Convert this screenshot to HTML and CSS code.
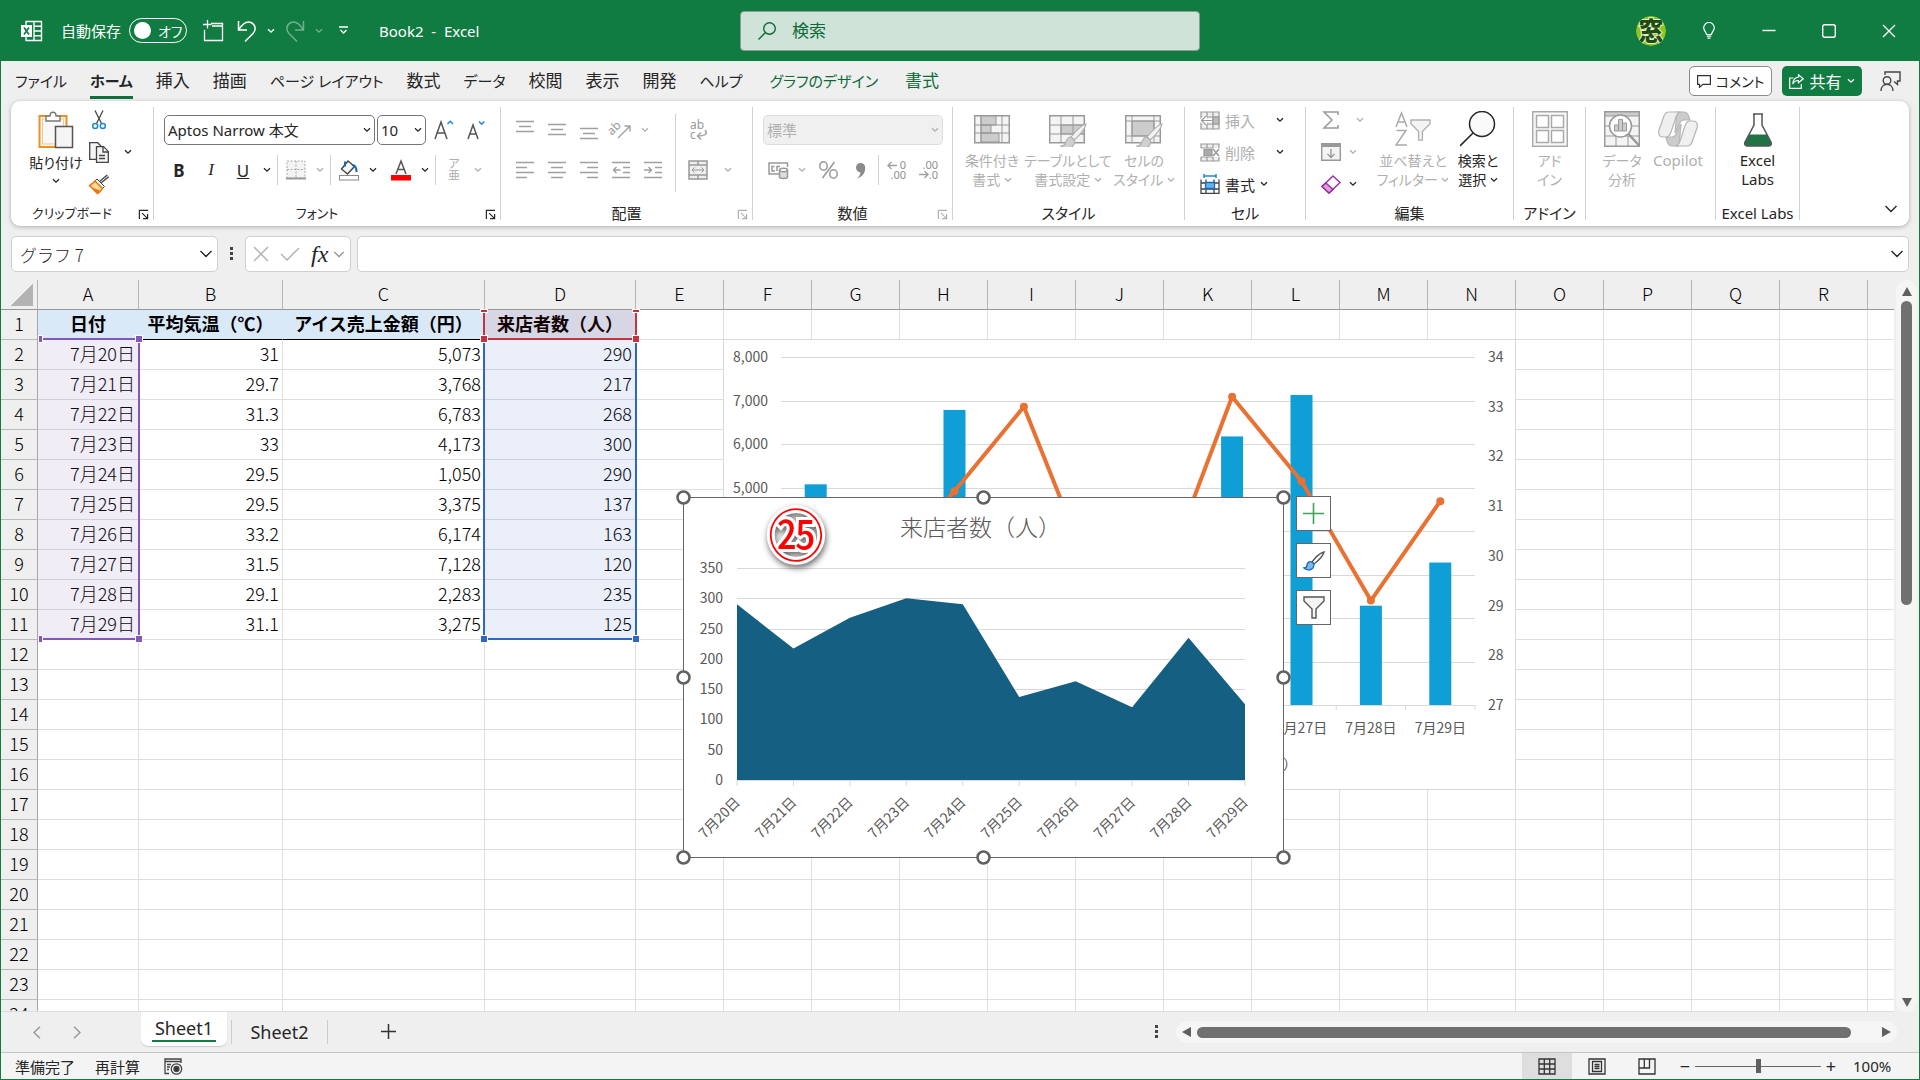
FILE: index.html
```html
<!DOCTYPE html>
<html lang="ja">
<head>
	<meta charset="UTF-8">
	<title>Book2 - Excel</title>
	<link rel="stylesheet" href="styles.css">
</head>
<body>

<!-- アイコン定義 -->
<svg class="defs" width="0" height="0">
	<symbol id="chev" viewBox="0 0 8 6"><path d="M1 1.2l3 3 3-3" fill="none" stroke="currentColor" stroke-width="1.3"/></symbol>
	<symbol id="chev-l" viewBox="0 0 14 10"><path d="M1.5 2l5.5 5.5L12.500 2" fill="none" stroke="currentColor" stroke-width="1.4"/></symbol>
	<symbol id="launch" viewBox="0 0 12 12"><path d="M1.500 11V1.500H11M4.500 4.500l5.500 5.500M10.500 5.500v5h-5" fill="none" stroke="currentColor" stroke-width="1.3"/></symbol>
	<symbol id="lens" viewBox="0 0 36 36"><circle cx="22" cy="13" r="12.500" fill="#fafafa" stroke="currentColor" stroke-width="1.5"/><path d="M13 22L0 35" stroke="currentColor" stroke-width="1.6"/></symbol>
	<symbol id="brush" viewBox="0 0 36 34">
		<path d="M35 9c-4 1-11 8-15 13l3 3c5-4 11-11 12-16z" fill="#f2f2f2" stroke="currentColor" stroke-width="1.200"/>
		<path d="M20 22c-3 0-4 2-5 5-1 3-3 4-5 4 3 3 11 4 13-2 1-2 1-3 0-4z" fill="#d0d0d0" stroke="currentColor" stroke-width="1.200"/>
	</symbol>
	<symbol id="funnel" viewBox="0 0 22 24"><path d="M1 1h20v4l-8 8v9H9v-9L1 5z" fill="#f4f4f4" stroke="currentColor" stroke-width="1.400"/></symbol>
</svg>

<header class="titlebar">
	<svg class="logo" width="22" height="22" viewBox="0 0 22 22" fill="none" stroke="#fff" stroke-width="1.400">
		<path d="M5 5V1.500h15.500v19H5V17M13 1.500v19M13 6.200h7.500M13 11h7.500M13 15.700h7.500"/>
		<rect x="0" y="5" width="11" height="12" fill="#fff" stroke="none"/>
		<path d="M3 7.500l5 7M8 7.500l-5 7" stroke="#107c41" stroke-width="1.700"/>
	</svg>
	<span class="autosave" id="autosave">自動保存</span>
	<button class="toggle" role="switch" aria-checked="false" aria-labelledby="autosave"><i></i>オフ</button>
	<button class="tb save" aria-label="新規"><svg width="22" height="22" viewBox="0 0 22 22" fill="none" stroke="#fff" stroke-width="1.300"><path d="M9 3.500h11.500v17h-18V10M5.500 0v8.500M1 4.500h8.500M10 6h10"/></svg></button>
	<button class="tb" aria-label="元に戻す"><svg width="20" height="22" viewBox="0 0 20 22" fill="none" stroke="#fff" stroke-width="1.500"><path d="M1.500 1v9H10M2 9.500C6 3 10 1 14 2.500c4.500 2 5.500 7 2 11L8 21.500"/></svg></button>
	<button class="tb narrow" aria-label="元に戻す一覧"><svg width="8" height="6"><use href="#chev"/></svg></button>
	<button class="tb dim" aria-label="やり直し"><svg width="20" height="22" viewBox="0 0 20 22" fill="none" stroke="#fff" stroke-width="1.500"><path d="M18.500 1v9H10M18 9.500C14 3 10 1 6 2.500c-4.500 2-5.500 7-2 11l8 8"/></svg></button>
	<button class="tb narrow dim" aria-label="やり直し一覧"><svg width="8" height="6"><use href="#chev"/></svg></button>
	<button class="tb" aria-label="ツールバーのカスタマイズ"><svg width="9" height="9" viewBox="0 0 9 9" fill="none" stroke="#fff" stroke-width="1.300"><path d="M0 1h9M1.500 4l3 3 3-3"/></svg></button>
	<span class="doc">Book2&nbsp; -&nbsp; Excel</span>
	<label class="search">
		<svg width="18" height="18" viewBox="0 0 18 18" fill="none" stroke="#0e6b38" stroke-width="1.400"><circle cx="11.500" cy="6.500" r="5.800"/><path d="M7.500 10.500L.5 17.500"/></svg>
		<input type="text" placeholder="検索" aria-label="検索">
	</label>
	<div class="winbtns">
		<svg class="avatar" width="30" height="30" viewBox="0 0 30 30"><circle cx="15" cy="15" r="15" fill="#8fc31f"/><text x="15" y="24" text-anchor="middle">窓</text></svg>
		<button aria-label="ヒント"><svg width="12" height="17" viewBox="0 0 12 17" fill="none" stroke="#fff" stroke-width="1.200"><path d="M3.500 12.500C3.500 10 .7 9 .7 5.800a5.300 5.300 0 0 1 10.600 0C11.300 9 8.500 10 8.500 12.500zM3.800 14.200h4.500M4.500 16.200h3"/></svg></button>
		<button aria-label="最小化"><svg width="14" height="14" viewBox="0 0 14 14"><path d="M.5 6.500h13" stroke="#fff" stroke-width="1.400"/></svg></button>
		<button aria-label="最大化"><svg width="14" height="14" viewBox="0 0 14 14"><rect x=".7" y=".7" width="12.600" height="12.600" rx="2" fill="none" stroke="#fff" stroke-width="1.400"/></svg></button>
		<button aria-label="閉じる"><svg width="14" height="14" viewBox="0 0 14 14"><path d="M1 1l12 12M13 1L1 13" stroke="#fff" stroke-width="1.300"/></svg></button>
	</div>
</header>

<nav class="tabs">
	<a href="#" class="kana">ファイル</a>
	<a href="#" class="kana on">ホーム</a>
	<a href="#">挿入</a>
	<a href="#">描画</a>
	<a href="#" class="kana">ページ レイアウト</a>
	<a href="#">数式</a>
	<a href="#" class="kana">データ</a>
	<a href="#">校閲</a>
	<a href="#">表示</a>
	<a href="#">開発</a>
	<a href="#" class="kana">ヘルプ</a>
	<a href="#" class="kana ctx">グラフのデザイン</a>
	<a href="#" class="ctx">書式</a>
	<div class="tabs-right">
		<button class="comment"><svg width="14" height="14" viewBox="0 0 14 14" fill="none" stroke="#333" stroke-width="1.200"><path d="M.6 1.600h12.800v8.800H6L2.500 13.300v-2.900H.6z"/></svg>コメント</button>
		<button class="share"><svg width="15" height="15" viewBox="0 0 15 15" fill="none" stroke="#fff" stroke-width="1.200"><path d="M4.500 4H.7v10.300h11.600V10M9.500.8l4.700 4-4.700 4V6.500C6.500 6.400 5 7.500 3.800 10c.2-4 2-6.500 5.700-7z"/></svg>共有<svg width="8" height="6"><use href="#chev"/></svg></button>
		<button class="person" aria-label="フィードバック"><svg width="21" height="21" viewBox="0 0 21 21" fill="none" stroke="#444" stroke-width="1.400"><path d="M5 4V1h15v9h-2.500v3.500L14 10.500M1 20c0-9 12-9 12 0"/><circle cx="7" cy="9.500" r="3.800"/></svg></button>
	</div>
</nav>

<section class="ribbon">
	<div class="group g-clip">
		<div class="body">
			<button class="big">
				<svg width="36" height="38" viewBox="0 0 36 38"><rect x="1.500" y="5" width="27" height="31" fill="#fff8ec" stroke="#e8912d" stroke-width="2"/><rect x="4.500" y="8" width="21" height="25" fill="#f8f8f8" stroke="#f5c98a"/><path d="M8 10V5h4c0-5 6-5 6 0h4v5z" fill="#fff" stroke="#777" stroke-width="1.400"/><rect x="17.500" y="15.500" width="17" height="21" fill="#f5f5f5" stroke="#555" stroke-width="1.500"/></svg>
				<span>貼り付け</span><svg class="under" width="8" height="6"><use href="#chev"/></svg>
			</button>
			<div class="stack">
				<button class="ib" aria-label="切り取り"><svg width="14" height="20" viewBox="0 0 14 20" fill="none" stroke="#444" stroke-width="1.300"><path d="M3 .5l6.500 13M11 .5L4.500 13.500"/><g stroke="#1e8bd0" stroke-width="1.500"><circle cx="3.200" cy="16" r="2.500"/><circle cx="10.800" cy="16" r="2.500"/></g></svg></button>
				<button class="ib" aria-label="コピー"><svg width="20" height="21" viewBox="0 0 20 21" fill="#f4f4f4" stroke="#444" stroke-width="1.300"><path d="M.7.7h8l3 3v13.600H.7z"/><path d="M7.500 4.700h7l4.800 4.800v10.800H7.500z"/><path d="M14 5v5h5M10 13.500h6M10 16.500h6"/></svg></button>
				<button class="ib" aria-label="書式のコピー"><svg width="20" height="19" viewBox="0 0 20 19"><path d="M19 .8L11.500 7" stroke="#444" stroke-width="3.500"/><path d="M19 .8L11.500 7" stroke="#fff" stroke-width="1"/><path d="M8 4l7.500 7.500-2 2L6 6z" fill="#fff" stroke="#444"/><path d="M6 6l7.500 7.500c-1 2-3 4-5 5L.5 10.500C2.500 9 4.500 8 6 6z" fill="#fbd9a0" stroke="#e8790c" stroke-width="1.500"/><path d="M8.500 18.500L3 12.500l8 3z" fill="#e8790c"/></svg></button>
			</div>
			<button class="cb" aria-label="コピー一覧"><svg width="8" height="6"><use href="#chev"/></svg></button>
		</div>
		<div class="name">クリップボード</div><svg class="la" width="11" height="11"><use href="#launch"/></svg>
	</div>

	<div class="group g-font">
		<div class="body rows">
			<div class="row">
				<span class="combo fname"><select aria-label="フォント"><option>Aptos Narrow 本文</option></select><svg width="8" height="6"><use href="#chev"/></svg></span>
				<span class="combo fsize"><select aria-label="サイズ"><option>10</option></select><svg width="8" height="6"><use href="#chev"/></svg></span>
				<button class="ib" aria-label="拡大"><svg width="20" height="20" viewBox="0 0 20 20" fill="none" stroke="#555" stroke-width="1.500"><path d="M1 19L7 2l6 17M3.200 13h7.700"/><path d="M13.500 4l2.700-2.700L19 4" stroke="#1e8bd0"/></svg></button>
				<button class="ib" aria-label="縮小"><svg width="20" height="20" viewBox="0 0 20 20" fill="none" stroke="#555" stroke-width="1.500"><path d="M2 19L7 5l5 14M3.800 14h6.500"/><path d="M13 1.500l2.700 2.700 2.700-2.700" stroke="#1e8bd0"/></svg></button>
			</div>
			<div class="row">
				<button class="ib t b">B</button><button class="ib t i">I</button><button class="ib t u">U</button><button class="cb" aria-label="下線"><svg width="8" height="6"><use href="#chev"/></svg></button>
				<i class="sep"></i>
				<button class="ib off" aria-label="罫線"><svg width="20" height="20" viewBox="0 0 20 20" stroke="#aaa" fill="#f4f4f4"><rect x="1" y="1" width="18" height="17" stroke-dasharray="2 1.500"/><path d="M10 1v17M1 9.500h18" stroke-dasharray="2 1.500"/><path d="M0 18.500h20" stroke="#999" stroke-width="2"/></svg></button><button class="cb off" aria-label="罫線一覧"><svg width="8" height="6"><use href="#chev"/></svg></button>
				<i class="sep"></i>
				<button class="ib" aria-label="塗りつぶし"><svg width="20" height="21" viewBox="0 0 20 21"><path d="M9 1L2.500 9l6 5 7-7.500z" fill="#f6f6f6" stroke="#444" stroke-width="1.400"/><path d="M6 1.500v5M13 5c3 0 4.500 3 4.500 7" stroke="#1769b5" stroke-width="2" fill="none"/><rect x=".5" y="15.500" width="19" height="4.500" fill="#fff" stroke="#888"/></svg></button><button class="cb" aria-label="塗りつぶし一覧"><svg width="8" height="6"><use href="#chev"/></svg></button>
				<button class="ib fc" aria-label="文字色"><svg width="20" height="21" viewBox="0 0 20 21"><path d="M5 14L10 1l5 13M6.800 9.500h6.500" fill="none" stroke="#555" stroke-width="1.500"/><rect y="15" width="20" height="5.500" fill="#f00"/></svg></button><button class="cb" aria-label="文字色一覧"><svg width="8" height="6"><use href="#chev"/></svg></button>
				<i class="sep"></i>
				<button class="ib off ruby">ア<br>亜</button><button class="cb off" aria-label="ふりがな一覧"><svg width="8" height="6"><use href="#chev"/></svg></button>
			</div>
		</div>
		<div class="name">フォント</div><svg class="la" width="11" height="11"><use href="#launch"/></svg>
	</div>

	<div class="group g-align">
		<div class="body">
			<div class="rows off">
				<div class="row">
					<button class="ib" aria-label="上揃え"><svg width="18" height="20" viewBox="0 0 18 20"><path d="M0 1.500h18M3 6.500h12M0 11.500h18" class="ln"/></svg></button>
					<button class="ib" aria-label="上下中央"><svg width="18" height="20" viewBox="0 0 18 20"><path d="M0 4.500h18M3 9.500h12M0 14.500h18" class="ln"/></svg></button>
					<button class="ib" aria-label="下揃え"><svg width="18" height="20" viewBox="0 0 18 20"><path d="M0 8.500h18M3 13.500h12M0 18.500h18" class="ln"/></svg></button>
					<button class="ib" aria-label="方向"><svg width="20" height="20" viewBox="0 0 20 20"><text x="-3" y="11" transform="rotate(-45 5 9)" class="ab">ab</text><path d="M7 18L18.500 6.500M13.500 6h5.500v5.500" class="ln"/></svg></button>
					<button class="cb" aria-label="方向一覧"><svg width="8" height="6"><use href="#chev"/></svg></button>
				</div>
				<div class="row">
					<button class="ib" aria-label="左揃え"><svg width="18" height="18" viewBox="0 0 18 18"><path d="M0 1.500h18M0 6.500h11M0 11.500h18M0 16.500h11" class="ln"/></svg></button>
					<button class="ib" aria-label="中央揃え"><svg width="18" height="18" viewBox="0 0 18 18"><path d="M0 1.500h18M3 6.500h12M0 11.500h18M3 16.500h12" class="ln"/></svg></button>
					<button class="ib" aria-label="右揃え"><svg width="18" height="18" viewBox="0 0 18 18"><path d="M0 1.500h18M7 6.500h11M0 11.500h18M7 16.500h11" class="ln"/></svg></button>
					<button class="ib" aria-label="インデント解除"><svg width="18" height="18" viewBox="0 0 18 18"><path d="M0 1.500h18M11 6.500h7M11 11.500h7M0 16.500h18M1.500 9h7M4.500 6l-3 3 3 3" class="ln"/></svg></button>
					<button class="ib" aria-label="インデント"><svg width="18" height="18" viewBox="0 0 18 18"><path d="M0 1.500h18M11 6.500h7M11 11.500h7M0 16.500h18M0 9h7M4.500 6l3 3-3 3" class="ln"/></svg></button>
				</div>
			</div>
			<i class="sep tall"></i>
			<div class="rows off">
				<div class="row"><button class="ib" aria-label="折り返し"><svg width="19" height="20" viewBox="0 0 19 20"><text x="1" y="9" class="ab">ab</text><text x="1" y="19" class="ab">c</text><path d="M16 10c3 3 1 6-7 6M12 12.500L8.500 16l3.500 3.500" class="ln"/></svg></button></div>
				<div class="row"><button class="ib" aria-label="セルを結合"><svg width="20" height="20" viewBox="0 0 20 20" fill="#eee" stroke="#999"><path d="M1 1h18v18H1zM1 5h18M1 15h18M10 1v4M10 15v4" stroke-width="1.500"/><path d="M4 10h12M6.500 7.500L4 10l2.500 2.500M13.500 7.500L16 10l-2.500 2.500" fill="none"/></svg></button><button class="cb merge" aria-label="結合一覧"><svg width="8" height="6"><use href="#chev"/></svg></button></div>
			</div>
		</div>
		<div class="name">配置</div><svg class="la off" width="11" height="11"><use href="#launch"/></svg>
	</div>

	<div class="group g-num">
		<div class="body rows off">
			<div class="row"><span class="combo fmt"><select aria-label="表示形式" disabled><option>標準</option></select><svg width="8" height="6"><use href="#chev"/></svg></span></div>
			<div class="row">
				<button class="ib" aria-label="通貨"><svg width="21" height="18" viewBox="0 0 21 18" fill="none" stroke="#999" stroke-width="1.500"><path d="M11 13H1V2h18.500v4M6.500 5.500H4v4.500h3M9 10V5.500h3"/><path d="M11.500 9v7c0 2 8 2 8 0V9" fill="#ddd"/><ellipse cx="15.500" cy="9" rx="4" ry="1.700" fill="#fff"/></svg></button><button class="cb" aria-label="通貨一覧"><svg width="8" height="6"><use href="#chev"/></svg></button>
				<button class="ib pc" aria-label="パーセント"><svg width="19" height="18" viewBox="0 0 19 18" fill="none" stroke="#999" stroke-width="1.500"><ellipse cx="4.500" cy="5" rx="3.700" ry="4.200"/><ellipse cx="14.500" cy="13" rx="3.700" ry="4.200"/><path d="M15.500 1L3.500 17"/></svg></button>
				<button class="ib" aria-label="桁区切り"><svg width="11" height="17" viewBox="0 0 11 17"><path d="M1 5.500a4.600 4.600 0 0 1 9.200 0C10.500 11 7 15 2 16.500c2-2 3.500-4 3.500-6.300C3 10.500 1 8 1 5.500z" fill="#8a8a8a"/></svg></button>
				<i class="sep"></i>
				<button class="ib" aria-label="小数点以下を増やす"><svg width="20" height="20" viewBox="0 0 20 20"><text x="19" y="9" class="dec">0</text><text x="19" y="19" class="dec">.00</text><path d="M1 5.500h9M4.500 2L1 5.500 4.500 9" class="ln"/></svg></button>
				<button class="ib" aria-label="小数点以下を減らす"><svg width="20" height="20" viewBox="0 0 20 20"><text x="19" y="9" class="dec">.00</text><text x="19" y="19" class="dec">.0</text><path d="M0 14.500h9M5.500 11L9 14.500 5.500 18" class="ln"/></svg></button>
			</div>
		</div>
		<div class="name">数値</div><svg class="la off" width="11" height="11"><use href="#launch"/></svg>
	</div>

	<div class="group g-style">
		<div class="body off">
			<button class="big"><svg width="36" height="36" viewBox="0 0 36 36" stroke="#999"><path d="M.7 4.700h34.600v27H.7z" fill="#f4f4f4" stroke-width="1.500"/><path d="M7 5h15v9H7zM7 14h10v8H7zM7 22h18v9H7z" fill="#ccc"/><path d="M7 5v26M1 14h34M1 22h34M28 5v26" fill="none"/></svg><span>条件付き<br>書式 <svg width="8" height="6"><use href="#chev"/></svg></span></button>
			<button class="big"><svg width="38" height="36" viewBox="0 0 38 36" stroke="#999"><path d="M.7 4.700h34.600v27H.7z" fill="#f4f4f4" stroke-width="1.500"/><path d="M12 14h23v9H12z" fill="#ccc"/><path d="M12 5v26M24 5v26M1 14h34M1 23h34" fill="none"/><use href="#brush" x="2" y="4" width="36" height="34"/></svg><span>テーブルとして<br>書式設定 <svg width="8" height="6"><use href="#chev"/></svg></span></button>
			<button class="big"><svg width="38" height="36" viewBox="0 0 38 36" stroke="#999"><path d="M.7 4.700h34.600v27H.7z" fill="#f4f4f4" stroke-width="1.500"/><path d="M7 10h22v15H7z" fill="#ccc"/><path d="M7 5v26M29 5v26M1 10h34M1 25h34" fill="none"/><use href="#brush" x="2" y="4" width="36" height="34"/></svg><span>セルの<br>スタイル <svg width="8" height="6"><use href="#chev"/></svg></span></button>
		</div>
		<div class="name">スタイル</div>
	</div>

	<div class="group g-cell">
		<div class="body stack">
			<div class="line"><button class="tx off"><svg width="20" height="19" viewBox="0 0 20 19" stroke="#999" fill="#eee" stroke-width="1.200"><path d="M1 1h18v17H1zM1 6h18M1 13h18M7 1v17M13 1v17"/><path d="M13 6h6v7h-6z" fill="#bbb"/><path d="M12 9.500H2M6 5L1.500 9.500 6 14" stroke="#fff" stroke-width="4"/><path d="M12 9.500H2M6 5L1.500 9.500 6 14" fill="none"/></svg>挿入</button><button class="cb" aria-label="挿入一覧"><svg width="8" height="6"><use href="#chev"/></svg></button></div>
			<div class="line"><button class="tx off"><svg width="20" height="19" viewBox="0 0 20 19" stroke="#999" fill="#eee" stroke-width="1.200"><path d="M1 5V1h18v4M1 14v4h18v-4M7 1v4M13 1v4M7 14v4M13 14v4M1 5h12M1 14h12"/><path d="M4 6.500h8v6H4z" fill="#aaa"/><path d="M13 6l6 7M19 6l-6 7" stroke-width="1.500"/></svg>削除</button><button class="cb" aria-label="削除一覧"><svg width="8" height="6"><use href="#chev"/></svg></button></div>
			<div class="line near"><button class="tx"><svg width="20" height="20" viewBox="0 0 20 20" stroke="#444" fill="#fff" stroke-width="1.300"><path d="M1 5.500v13.800h18V5.500M1 9h18M1 15h18M6 5.500v13.800M14 5.500v13.800"/><path d="M5.500 8.500h9v6h-9z" fill="#6bb0ec" stroke="#1769b5"/><path d="M4 2h12M4 0v4M16 0v4" stroke="#1e8bd0" stroke-width="1.500"/></svg>書式</button><button class="cb" aria-label="書式一覧"><svg width="8" height="6"><use href="#chev"/></svg></button></div>
		</div>
		<div class="name">セル</div>
	</div>

	<div class="group g-edit">
		<div class="body">
			<div class="stack">
				<div class="line off sum"><button class="ib" aria-label="合計"><svg width="16" height="18" viewBox="0 0 16 18"><path d="M15 4V1H1l8 8-8 8h14v-3" fill="none" stroke="#999" stroke-width="1.500"/></svg></button><button class="cb" aria-label="合計一覧"><svg width="8" height="6"><use href="#chev"/></svg></button></div>
				<div class="line off"><button class="ib" aria-label="フィル"><svg width="20" height="18" viewBox="0 0 20 18" fill="#f4f4f4" stroke="#999" stroke-width="1.400"><path d="M.7.7h18.600v16.600H.7z"/><path d="M1 2.500h18" stroke-width="3"/><path d="M10 6v8M6.500 11l3.500 3.500 3.500-3.500" fill="none"/></svg></button><button class="cb" aria-label="フィル一覧"><svg width="8" height="6"><use href="#chev"/></svg></button></div>
				<div class="line"><button class="ib" aria-label="クリア"><svg width="20" height="19" viewBox="0 0 20 19" stroke="#9a2ca0" stroke-width="1.400"><path d="M12 1l7 6.500L8 18l-7-6.500z" fill="#fff"/><path d="M5 8l7 6.500L8 18l-7-6.500z" fill="#d9a0dc"/></svg></button><button class="cb" aria-label="クリア一覧"><svg width="8" height="6"><use href="#chev"/></svg></button></div>
			</div>
			<button class="big off"><svg width="36" height="36" viewBox="0 0 36 36" fill="none" stroke="#aaa" stroke-width="1.500"><path d="M1 16L6.500 2 12 16M3 11h7M1.500 19.500H11L1 34h11"/><use href="#funnel" x="15" y="8" width="21" height="23"/></svg><span>並べ替えと<br>フィルター <svg width="8" height="6"><use href="#chev"/></svg></span></button>
			<button class="big find"><svg width="36" height="36"><use href="#lens"/></svg><span>検索と<br>選択 <svg width="8" height="6"><use href="#chev"/></svg></span></button>
		</div>
		<div class="name">編集</div>
	</div>

	<div class="group g-add">
		<div class="body off"><button class="big"><svg width="36" height="36" viewBox="0 0 36 36" fill="#f8f8f8" stroke="#aaa" stroke-width="1.500"><path d="M.7.7h34.600v34.600H.7z"/><path d="M4.500 4.500h12v12h-12zM19.500 4.500h12v12h-12zM4.500 19.500h12v12h-12zM19.500 19.500h12v12h-12z" fill="#fff"/></svg><span>アド<br>イン</span></button></div>
		<div class="name">アドイン</div>
	</div>

	<div class="group g-data">
		<div class="body off">
			<button class="big"><svg width="36" height="36" viewBox="0 0 36 36" fill="#f4f4f4" stroke="#999"><path d="M.7.7h34.600v34.600H.7z" stroke-width="1.500"/><path d="M1 1h34v4H1z" fill="#ccc"/><path d="M1 15h34M1 25h34M12 25v10M24 25v10"/><circle cx="16.500" cy="15" r="11" fill="#fff" stroke-width="1.500"/><path d="M24.500 23l11 12" stroke-width="2.500"/><path d="M10.500 14h4v6h-4zM14.500 8.500h4V20h-4zM18.500 12h4v8h-4z" fill="#ccc"/></svg><span>データ<br>分析</span></button>
			<button class="big latin copilot"><svg width="40" height="36" viewBox="0 0 40 36" stroke="#b5b5b5" stroke-width="1.200"><path d="M19 1h7c3 0 4 2 5 5l1 3h-6c-3 0-4 2-5 5l-4 8z" fill="#ccc"/><path d="M21 35h-7c-3 0-4-2-5-5l-1-4h6c3 0 4-2 5-5l4-8z" fill="#ccc"/><path d="M11 1h12c-3 0-4 2-5 5l-5 15c-1 3-2 5-5 5H5c-4 0-5-3-4-7L6 5c1-3 2-4 5-4z" fill="#f0f0f0"/><path d="M29 35H17c3 0 4-2 5-5l5-15c1-3 2-5 5-5h3c4 0 5 3 4 7l-5 14c-1 3-2 4-5 4z" fill="#f0f0f0"/></svg><span>Copilot</span></button>
		</div>
	</div>

	<div class="group g-labs">
		<div class="body"><button class="big latin"><svg width="28" height="34" viewBox="0 0 28 34"><path d="M10 1v11L1 29c-1 2 0 4 2 4h22c2 0 3-2 2-4l-9-17V1z" fill="#fff"/><path d="M5 21.500h18l4 8c.5 2-.5 3.500-2 3.500H3c-2 0-2.500-2-2-3.500z" fill="#217346"/><path d="M9 1h10M10 1v11L1 29c-1 2 0 4 2 4h22c2 0 3-2 2-4l-9-17V1" fill="none" stroke="#555" stroke-width="1.500"/></svg><span>Excel<br>Labs</span></button></div>
		<div class="name">Excel Labs</div>
	</div>
	<button class="collapse" aria-label="リボンを折りたたむ"><svg width="14" height="10"><use href="#chev-l"/></svg></button>
</section>

<div class="fbar">
	<div class="box namebox"><input type="text" value="グラフ 7" aria-label="名前ボックス"><svg width="14" height="10"><use href="#chev-l"/></svg></div>
	<svg class="dots" width="4" height="14" viewBox="0 0 4 14" fill="#444"><path d="M0 0h3v3H0zM0 5h3v3H0zM0 10h3v3H0z"/></svg>
	<div class="box fx">
		<button aria-label="キャンセル"><svg width="16" height="16" viewBox="0 0 16 16"><path d="M1 1l14 14M15 1L1 15" stroke="#b5b5b5" stroke-width="1.500"/></svg></button>
		<button aria-label="入力"><svg width="20" height="14" viewBox="0 0 20 14"><path d="M1 7l6 6L19 1" fill="none" stroke="#b5b5b5" stroke-width="1.500"/></svg></button>
		<button class="fn">fx</button>
		<button class="fnch" aria-label="関数一覧"><svg width="12" height="9"><use href="#chev-l"/></svg></button>
	</div>
	<div class="box formula"><input type="text" aria-label="数式バー"><svg width="14" height="10"><use href="#chev-l"/></svg></div>
</div>

<main class="work">
	<div class="sheet">
		<table id="grid"></table>
		<div class="range purple"><i></i><i></i><i></i><i></i></div>
		<div class="range blue"><i></i><i></i><i></i><i></i></div>
		<div class="range red"><i></i><i></i><i></i><i></i></div>
		<svg class="chart combo-chart" id="combo" width="793" height="451"></svg>
		<svg class="chart area-chart" id="area" width="616" height="376"></svg>
		<div class="chartbtns">
			<button aria-label="グラフ要素"><svg width="21" height="21" viewBox="0 0 21 21"><path d="M10.500 0v21M0 10.500h21" stroke="#3aa655" stroke-width="1.600"/></svg></button>
			<button aria-label="グラフスタイル"><svg width="22" height="20" viewBox="0 0 22 20"><path d="M21 1c-4 1-9 6-12 10l2 2c4-3 9-8 10-12z" fill="#fff" stroke="#555" stroke-width="1.300"/><path d="M9 11c-3-1-5 1-5 3s-1 3-3 3c3 3 10 3 10-4z" fill="#7ab8ef" stroke="#1769b5" stroke-width="1.300"/></svg></button>
			<button aria-label="グラフフィルター"><svg width="22" height="24"><use href="#funnel"/></svg></button>
		</div>
	</div>
	<div class="vscroll"><b class="up"></b><span></span><b class="down"></b></div>
</main>

<footer>
	<div class="sheettabs">
		<button class="nav" aria-label="前へ"><svg width="8" height="13" viewBox="0 0 8 13"><path d="M7 .7L1 6.500l6 5.800" fill="none" stroke="#999" stroke-width="1.500"/></svg></button>
		<button class="nav" aria-label="次へ"><svg width="8" height="13" viewBox="0 0 8 13"><path d="M1 .7l6 5.800-6 5.800" fill="none" stroke="#999" stroke-width="1.500"/></svg></button>
		<a href="#" class="st cur"><span>Sheet1</span></a>
		<a href="#" class="st">Sheet2</a>
		<button class="plus" aria-label="新しいシート"><svg width="15" height="15" viewBox="0 0 15 15"><path d="M7.500 0v15M0 7.500h15" stroke="#333" stroke-width="1.500"/></svg></button>
		<svg class="grip" width="4" height="14" viewBox="0 0 4 14" fill="#444"><path d="M0 0h3v3H0zM0 5h3v3H0zM0 10h3v3H0z"/></svg>
		<div class="hscroll"><b class="left"></b><span></span><b class="right"></b></div>
	</div>
	<div class="status">
		<span>準備完了</span><span>再計算</span>
		<svg class="rec" width="19" height="17" viewBox="0 0 19 17" fill="none" stroke="#444" stroke-width="1.300"><path d="M5 15.500H1V1h16v4M1 3.500h16M3 6.500h4M3 9h3M3 11.500h2" /><circle cx="12.500" cy="11" r="5.200"/><circle cx="12.500" cy="11" r="2.500" fill="#333"/></svg>
		<div class="views">
			<button class="cur" aria-label="標準"><svg width="18" height="17" viewBox="0 0 18 17" fill="none" stroke="#333" stroke-width="1.300"><path d="M1 1h16v15H1zM1 6h16M1 11h16M6.300 1v15M11.700 1v15"/></svg></button>
			<button aria-label="ページ レイアウト"><svg width="18" height="17" viewBox="0 0 18 17" fill="none" stroke="#333" stroke-width="1.300"><path d="M1 1h16v15H1zM4.500 3.500h9v10h-9zM6.500 6.500h5M6.500 8.500h5M6.500 10.500h5"/></svg></button>
			<button aria-label="改ページ"><svg width="18" height="17" viewBox="0 0 18 17" fill="none" stroke="#333" stroke-width="1.300"><path d="M1 1h16v15H1zM1 10h10.500V1M6.300 1v9"/></svg></button>
		</div>
		<button class="z">−</button>
		<input type="range" min="0" max="100" value="50" aria-label="ズーム">
		<button class="z">+</button>
		<span class="pct">100%</span>
	</div>
</footer>

<script type="text/javascript">
var days = ["7月20日","7月21日","7月22日","7月23日","7月24日","7月25日","7月26日","7月27日","7月28日","7月29日"];
var temp = [31,29.7,31.3,33,29.5,29.5,33.2,31.5,29.1,31.1];
var sales = [5073,3768,6783,4173,1050,3375,6174,7128,2283,3275];
var guests = [290,217,268,300,290,137,163,120,235,125];
var heads = ["日付","平均気温（℃）","アイス売上金額（円）","来店者数（人）"];

//シート本体
function makeGrid(){
	var letters = "ABCDEFGHIJKLMNOPQRS".split("");
	var html = '<colgroup><col class="col-h"><col class="col-a"><col class="col-b"><col class="col-c"><col class="col-d">';
	for(var i=4;i<letters.length;i++){
		html += '<col class="col-x">';
	}
	html += '</colgroup><thead><tr><th class="corner"></th>';
	for(var i=0;i<letters.length;i++){
		html += '<th scope="col">'+letters[i]+'</th>';
	}
	html += '</tr></thead><tbody>';
	for(var r=1;r<=24;r++){
		html += '<tr><th scope="row">'+r+'</th>';
		var cells = [];
		if(r==1){
			cells = heads;
		} else if(r<=11){
			cells = [days[r-2], temp[r-2], sales[r-2].toLocaleString("en-US"), guests[r-2]];
		}
		for(var c=0;c<letters.length;c++){
			var v = cells[c]===undefined ? "" : cells[c];
			html += (r==1 && c<4) ? '<td class="head">'+v+'</td>' : '<td>'+v+'</td>';
		}
		html += '</tr>';
	}
	document.getElementById("grid").innerHTML = html+'</tbody>';
}

function line(x1,y1,x2,y2){
	return '<path class="gl" d="M'+x1+' '+y1+'L'+x2+' '+y2+'"/>';
}

//棒と折れ線の複合グラフ
function makeCombo(){
	var left=58, right=752, top=18, bottom=366, step=(right-left)/10;
	var s = '<rect class="frame" x="0.5" y="0.5" width="792" height="450"/>';
	for(var i=0;i<=8;i++){
		var y = Math.round(bottom-(bottom-top)*i/8)+0.5;
		s += line(left,y,right,y);
		s += '<text class="ax end" x="45" y="'+(y+4)+'">'+(i*1000).toLocaleString("en-US")+'</text>';
	}
	for(var i=0;i<=7;i++){
		s += '<text class="ax" x="765" y="'+(bottom+5-(bottom-top)*i/7)+'">'+(27+i)+'</text>';
	}
	var pts = [], dots = "";
	for(var i=0;i<10;i++){
		var x = left+step*(i+0.5);
		var h = sales[i]/8000*(bottom-top);
		var ty = bottom-(temp[i]-27)/7*(bottom-top);
		s += '<rect class="bar" x="'+(x-11)+'" y="'+(bottom-h)+'" width="22" height="'+h+'"/>';
		s += line(left+step*(i+1),bottom,left+step*(i+1),bottom+5);
		s += '<text class="ax mid" x="'+x+'" y="394">'+days[i]+'</text>';
		pts.push(x+","+ty);
		dots += '<circle class="dot" cx="'+x+'" cy="'+ty+'" r="4"/>';
	}
	s += '<polyline class="tl" points="'+pts.join(" ")+'"/>'+dots;
	s += '<text class="ax end" x="574" y="430">アイス売上金額（円）　平均気温（℃）</text>';
	document.getElementById("combo").innerHTML = s;
}

//面グラフ（選択中）
function makeArea(){
	var left=62, right=570, top=79, bottom=291, step=(right-left)/9;
	var s = '<rect class="sel" x="8.5" y="8.5" width="600" height="360"/>';
	s += '<text class="ttl" x="225" y="47">来店者数（人）</text>';
	for(var i=0;i<=7;i++){
		var y = Math.round(bottom-(bottom-top)*i/7)+0.5;
		s += line(left,y,right,y);
		s += '<text class="ax end" x="48" y="'+(y+4)+'">'+i*50+'</text>';
	}
	var pts = left+","+bottom;
	for(var i=0;i<10;i++){
		var x = left+step*i;
		pts += " "+x+","+(bottom-guests[i]/350*(bottom-top));
		s += line(x,bottom,x,bottom+6);
		s += '<text class="ax end" x="'+(x+4)+'" y="314" transform="rotate(-45 '+(x+4)+' 314)">'+days[i]+'</text>';
	}
	s += '<polygon class="fill" points="'+pts+" "+right+","+bottom+'"/>';
	var hx=[8.5,308.5,608.5], hy=[8.5,188.5,368.5];
	for(var i=0;i<3;i++){
		for(var j=0;j<3;j++){
			if(i!=1 || j!=1){
				s += '<circle class="hd" cx="'+hx[i]+'" cy="'+hy[j]+'" r="6"/>';
			}
		}
	}
	s += '<text class="badge" x="121" y="67">㉕</text>';
	document.getElementById("area").innerHTML = s;
}

makeGrid();
makeCombo();
makeArea();
</script>
</body>
</html>
```

FILE: styles.css
```css
*{
	box-sizing: border-box;
	margin: 0;
	padding: 0;
}
body{
	display: flex;
	flex-direction: column;
	height: 100vh;
	overflow: hidden;
	border: 1px solid #107c41;
	border-top: 0;
	background: #efefef;
	color: #262626;
	font: 15px "Noto Sans", "Noto Sans CJK JP", sans-serif;
}
button, input, select{
	border: 0;
	background: none;
	color: inherit;
	font: inherit;
}
a{
	color: inherit;
	text-decoration: none;
}
svg{
	flex: none;
}
.defs{
	position: absolute;
}
.titlebar, .tabs, .ribbon, .status{
	font-feature-settings: "palt";
}

/* タイトルバー */
.titlebar{
	display: flex;
	align-items: center;
	height: 61px;
	padding-left: 20px;
	background: #107c41;
	color: #fff;
}
.autosave{
	margin-left: 18px;
	width: 60px;
	white-space: nowrap;
}
.toggle{
	display: flex;
	align-items: center;
	gap: 7px;
	width: 58px;
	height: 25px;
	margin: 0 8px;
	padding-left: 4px;
	border: 1px solid #fff;
	border-radius: 13px;
	white-space: nowrap;
	font-size: 14px;
}
.toggle i{
	width: 17px;
	height: 17px;
	border-radius: 50%;
	background: #fff;
}
.tb{
	display: flex;
	justify-content: center;
	align-items: center;
	width: 32px;
	height: 32px;
}
.tb.save{
	width: 36px;
}
.tb.narrow{
	width: 16px;
}
.dim{
	opacity: .4;
}
.doc{
	margin-left: 20px;
	width: 361px;
}
.search{
	display: flex;
	align-items: center;
	width: 460px;
	height: 40px;
	padding-left: 17px;
	border: 1px solid #8c9c92;
	border-radius: 4px;
	background: #cfe3d8;
	color: #0e6b38;
}
.search input{
	flex: 1;
	margin-left: 16px;
	font-size: 17px;
	outline: 0;
}
.search input::placeholder{
	color: #0e6b38;
	opacity: 1;
}
.winbtns{
	display: flex;
	align-items: center;
	margin-left: auto;
}
.winbtns button{
	display: flex;
	justify-content: center;
	align-items: center;
	width: 60px;
	height: 60px;
}
.avatar{
	margin-right: 13px;
	border-radius: 50%;
}
.avatar text{
	font: 900 25px "Noto Sans CJK JP", sans-serif;
	fill: #1e4d14;
	stroke: #e6f2c8;
	stroke-width: 2px;
	paint-order: stroke;
}

/* タブ */
.tabs{
	display: flex;
	align-items: center;
	height: 40px;
	padding-left: 14px;
	gap: 23px;
	font-size: 17px;
	white-space: nowrap;
}
.tabs a{
	height: 36px;
	line-height: 36px;
}
.tabs a.kana{
	font-size: 15px;
}
.tabs a.on{
	border-bottom: 3px solid #0f703b;
	font-weight: bold;
}
.tabs a.ctx{
	margin-left: 4px;
	color: #0e6b38;
}
.tabs-right{
	display: flex;
	align-items: center;
	gap: 10px;
	margin-left: auto;
	margin-right: 11px;
}
.tabs-right button{
	display: flex;
	align-items: center;
	justify-content: center;
	gap: 5px;
	height: 30px;
	border-radius: 5px;
}
.comment{
	width: 83px;
	border: 1px solid #8a8a8a;
	background: #fff;
	font-size: 14px;
}
.share{
	width: 80px;
	background: #107c41;
	color: #fff;
	font-size: 16px;
}
.person{
	width: 36px;
}

/* リボン */
.ribbon{
	display: flex;
	height: 125px;
	margin: 0 10px;
	padding: 6px 0;
	border-radius: 9px;
	background: #fff;
	box-shadow: 0 1px 4px rgba(0,0,0,.28);
}
.group{
	position: relative;
	height: 113px;
	border-right: 1px solid #d0d0d0;
}
.body{
	display: flex;
	height: 96px;
}
.name{
	line-height: 20px;
	text-align: center;
	white-space: nowrap;
}
.la{
	position: absolute;
	right: 4px;
	bottom: 0;
}
.off{
	color: #b0b0b0;
}
.g-clip{ width: 143px; }
.g-font{ width: 347px; }
.g-align{ width: 252px; }
.g-num{ width: 200px; }
.g-style{ width: 232px; }
.g-cell{ width: 121px; }
.g-edit{ width: 208px; }
.g-add{ width: 72px; }
.g-data{ width: 130px; }
.g-labs{ width: 84px; }
.g-clip .name, .g-font .name{
	padding-right: 20px;
	font-size: 13px;
}
.rows{
	display: flex;
	flex-direction: column;
	padding-top: 3px;
}
.row{
	display: flex;
	align-items: center;
	height: 40px;
}
.ib, .cb{
	display: flex;
	align-items: center;
	justify-content: center;
	width: 32px;
	height: 30px;
}
.ib svg{
	overflow: visible;
}
.cb{
	width: 16px;
}
.sep{
	width: 1px;
	height: 30px;
	margin: 0 2px;
	background: #d0d0d0;
}
.sep.tall{
	height: 78px;
	margin: 7px 6px 0;
}
.ln{
	fill: none;
	stroke: #a0a0a0;
	stroke-width: 1.4;
}
.ab{
	font-size: 12px;
	fill: #999;
}
.dec{
	font-size: 11px;
	fill: #909090;
	text-anchor: end;
}
.stack{
	display: flex;
	flex-direction: column;
}
.stack > *{
	height: 32px;
}
.line{
	display: flex;
	align-items: center;
}
.big{
	display: flex;
	flex-direction: column;
	align-items: center;
	padding-top: 4px;
	width: 76px;
	font-size: 14px;
	line-height: 19px;
	white-space: nowrap;
}
.big.latin{
	font-size: 15px;
}
.big span{
	margin-top: 4px;
}
.big span svg{
	vertical-align: 2px;
}
.big .under{
	margin-top: 6px;
}
.g-clip .big{
	width: 70px;
	margin-left: 10px;
}
.g-clip .stack{
	margin: -3px 0 0 -8px;
}
.g-clip .cb{
	margin: 30px 0 0 5px;
}
.g-font .body{
	padding-left: 9px;
}
.combo{
	position: relative;
}
.combo select{
	width: 100%;
	height: 30px;
	padding-left: 3px;
	border: 1px solid #767676;
	border-radius: 5px;
	appearance: none;
	background: #fff;
}
.combo svg{
	position: absolute;
	right: 4px;
	top: 12px;
	pointer-events: none;
}
.fname{
	width: 211px;
	margin-left: 1px;
}
.fsize{
	width: 49px;
	margin: 0 2px;
}
.fmt{
	width: 180px;
}
.fmt select{
	border-color: #ddd;
	background: #f0f0f0;
	opacity: 1;
}
.t{
	font-size: 17px;
}
.t.b{
	font-weight: bold;
}
.t.i{
	font-family: "Liberation Serif", serif;
	font-style: italic;
}
.t.u{
	text-decoration: underline;
}
.fc{
	margin-left: 4px;
}
.ruby{
	font-size: 12px;
	line-height: 12px;
}
.g-align .body{
	padding-left: 8px;
}
.merge{
	margin-left: 6px;
}
.g-num .body{
	padding-left: 9px;
}
.g-num .row:first-child{
	padding-left: 1px;
}
.pc{
	margin-left: 2px;
}
.g-style .body{
	padding-left: 1px;
}
.g-cell .body{
	margin-top: -3px;
	height: 99px;
	padding-left: 14px;
}
.tx{
	display: flex;
	align-items: center;
	gap: 5px;
	width: 73px;
	padding-left: 1px;
}
.near .tx{
	width: 57px;
}
.g-edit .stack{
	width: 64px;
	margin-top: -3px;
	padding-left: 9px;
}
.g-edit .cb{
	margin-left: -2px;
}
.g-edit .sum .cb{
	margin-left: 5px;
}
.g-edit .big{
	width: 86px;
}
.g-edit .find{
	width: 44px;
}
.g-add .big{
	width: 72px;
}
.g-data .big{
	width: 72px;
}
.g-data .copilot{
	width: 40px;
}
.g-labs .big{
	width: 84px;
	padding-top: 6px;
}
.collapse{
	align-self: flex-end;
	margin: 0 11px 2px auto;
}

/* 数式バー */
.fbar{
	display: flex;
	align-items: center;
	height: 54px;
	padding: 2px 10px 0;
}
.box{
	display: flex;
	align-items: center;
	height: 36px;
	border: 1px solid #d0d0d0;
	border-radius: 5px;
	background: #fff;
}
.box input{
	flex: 1;
	min-width: 0;
	padding-left: 8px;
	font: 300 17px "Noto Sans CJK JP", sans-serif;
	outline: 0;
}
.namebox{
	width: 207px;
	padding-right: 4px;
}
.dots{
	margin: 0 11px 0 12px;
}
.fx{
	width: 106px;
	margin-right: 6px;
	gap: 11px;
	padding-left: 7px;
}
.fx button{
	display: flex;
}
.fn{
	font: italic 24px/22px "Liberation Serif", serif;
}
.fnch{
	margin-left: -6px;
	color: #888;
}
.formula{
	flex: 1;
	padding-right: 4px;
}

/* シート */
.work{
	display: flex;
	flex: 1;
	min-height: 0;
}
.sheet{
	position: relative;
	flex: 1;
	overflow: hidden;
	border-bottom: 1px solid #ddd;
	background: #fff;
}
#grid{
	width: 1955px;
	table-layout: fixed;
	border-collapse: separate;
	border-spacing: 0;
	color: #000;
	font: 300 18px/26px "Noto Sans CJK JP", sans-serif;
}
.col-h{ width: 37px; }
.col-a{ width: 101px; }
.col-b{ width: 144px; }
.col-c{ width: 202px; }
.col-d{ width: 151px; }
.col-x{ width: 88px; }
#grid td{
	height: 30px;
	padding: 0 3px 3px;
	border-right: 1px solid #dedede;
	border-bottom: 1px solid #dedede;
	text-align: right;
	white-space: nowrap;
}
#grid td.head{
	padding: 0 0 3px;
	border-right-color: #dae9f8;
	border-bottom-color: #000;
	background: #dae9f8;
	text-align: center;
	font-weight: bold;
}
#grid th{
	height: 30px;
	padding-bottom: 3px;
	background: #efefef;
	border-right: 1px solid #a6a6a6;
	border-bottom: 1px solid #bbb;
	font-weight: 300;
}
#grid thead th{
	border-right-color: #b5b5b5;
	border-bottom-color: #979797;
}
#grid .corner{
	background: linear-gradient(135deg, transparent 50%, #b3b3b3 50%) 10px 4px / 22px 22px no-repeat #efefef;
}
.range{
	position: absolute;
	border: 2px solid;
}
.range i{
	position: absolute;
	width: 6px;
	height: 6px;
	outline: 1px solid #fff;
	background: currentColor;
}
.range i:nth-child(1){ left: -4px; top: -4px; }
.range i:nth-child(2){ right: -4px; top: -4px; }
.range i:nth-child(3){ left: -4px; bottom: -4px; }
.range i:nth-child(4){ right: -4px; bottom: -4px; }
.purple{
	left: 37px;
	top: 58px;
	width: 102px;
	height: 302px;
	border-left: 0;
	color: #8358b8;
	background: rgba(131,88,184,.11);
}
.purple i:nth-child(odd){
	left: 1px;
	width: 3px;
}
.blue{
	left: 482px;
	top: 58px;
	width: 154px;
	height: 302px;
	color: #2f66c4;
	background: rgba(47,102,196,.1);
}
.red{
	left: 482px;
	top: 30px;
	width: 154px;
	height: 30px;
	border-top: 0;
	color: #c4343e;
	background: rgba(196,52,62,.1);
}
.red i:nth-child(-n+2){
	top: 0;
	height: 2px;
}
.chart{
	position: absolute;
}
.combo-chart{
	left: 722px;
	top: 59px;
}
.area-chart{
	left: 674px;
	top: 209px;
}
.frame{
	fill: #fff;
	stroke: #d9d9d9;
}
.sel{
	fill: #fff;
	stroke: #666;
}
.gl{
	stroke: #d9d9d9;
}
.ax{
	font: 14px "Noto Sans CJK JP", sans-serif;
	fill: #595959;
}
.end{
	text-anchor: end;
}
.mid{
	text-anchor: middle;
}
.bar{
	fill: #0f9ed5;
}
.tl{
	fill: none;
	stroke: #e97132;
	stroke-width: 4;
	stroke-linejoin: round;
}
.dot{
	fill: #e97132;
}
.ttl{
	font: 300 23px "Noto Sans CJK JP", sans-serif;
	fill: #595959;
}
.fill{
	fill: #156082;
}
.hd{
	fill: #fff;
	stroke: #606060;
	stroke-width: 2.5;
}
.badge{
	font: 56px "Noto Sans CJK JP", sans-serif;
	fill: #f00;
	stroke: #fff;
	stroke-width: 6px;
	paint-order: stroke;
	text-anchor: middle;
	filter: drop-shadow(1px 3px 3px rgba(0,0,0,.6));
}
.chartbtns{
	position: absolute;
	left: 1295px;
	top: 216px;
	display: flex;
	flex-direction: column;
	gap: 12px;
}
.chartbtns button{
	display: flex;
	align-items: center;
	justify-content: center;
	width: 35px;
	height: 35px;
	border: 1px solid #666;
	background: #fff;
	color: #555;
}

/* スクロールバー */
.vscroll{
	display: flex;
	flex-direction: column;
	align-items: center;
	width: 21px;
	margin: 0 2px;
	padding: 7px 0 5px;
	border-radius: 10px;
	background: #f5f5f5;
}
.vscroll span{
	width: 11px;
	height: 304px;
	margin-top: 5px;
	border-radius: 6px;
	background: #707070;
}
.up, .down, .left, .right{
	border: 5px solid transparent;
}
.up{
	border-bottom: 9px solid #606060;
	border-top: 0;
}
.down{
	margin-top: auto;
	border-top: 9px solid #606060;
	border-bottom: 0;
}
.left{
	border-right: 9px solid #606060;
	border-left: 0;
}
.right{
	margin-left: auto;
	border-left: 9px solid #606060;
	border-right: 0;
}

/* シート見出しとステータスバー */
.sheettabs{
	display: flex;
	height: 40px;
	align-items: center;
	padding: 0 22px 0 16px;
	font-size: 18px;
}
.nav{
	width: 40px;
}
.st{
	width: 97px;
	text-align: center;
	border-right: 1px solid #ccc;
	line-height: 24px;
}
.st.cur{
	align-self: flex-start;
	width: 86px;
	height: 35px;
	margin: -1px 0 0 44px;
	border: 0;
	border-radius: 0 0 7px 7px;
	background: #fff;
	box-shadow: 0 1px 1px rgba(0,0,0,.15);
}
.st.cur span{
	display: inline-block;
	padding: 5px 3px 0;
	border-bottom: 2px solid #107c41;
}
.st:not(.cur){
	margin-left: 4px;
	border-left: 1px solid #ccc;
}
.plus{
	margin-left: 53px;
}
.grip{
	margin-left: auto;
}
.hscroll{
	display: flex;
	align-items: center;
	width: 721px;
	height: 22px;
	margin-left: 17px;
	padding: 0 6px;
	border-radius: 11px;
	background: #f6f6f6;
}
.hscroll span{
	width: 654px;
	height: 11px;
	margin-left: 6px;
	border-radius: 6px;
	background: #707070;
}
.status{
	display: flex;
	align-items: center;
	height: 27px;
	padding: 0 24px 0 14px;
	border-top: 1px solid #c4c4c4;
	background: #f4f4f4;
}
.status > span{
	margin-right: 20px;
}
.rec{
	margin-left: 4px;
}
.views{
	display: flex;
	height: 26px;
	margin-left: auto;
	margin-right: 3px;
}
.views button{
	display: flex;
	align-items: center;
	justify-content: center;
	width: 50px;
}
.views .cur{
	background: #dedede;
}
.z{
	width: 20px;
	font-size: 18px;
	line-height: 20px;
}
.status input{
	width: 126px;
	height: 20px;
	appearance: none;
	background: linear-gradient(#666, #666) 0 10px / 100% 1px no-repeat;
}
.status input::-webkit-slider-thumb{
	appearance: none;
	width: 5px;
	height: 14px;
	background: #606060;
}
.status .pct{
	width: 42px;
	margin: 0 0 0 12px;
}
```
